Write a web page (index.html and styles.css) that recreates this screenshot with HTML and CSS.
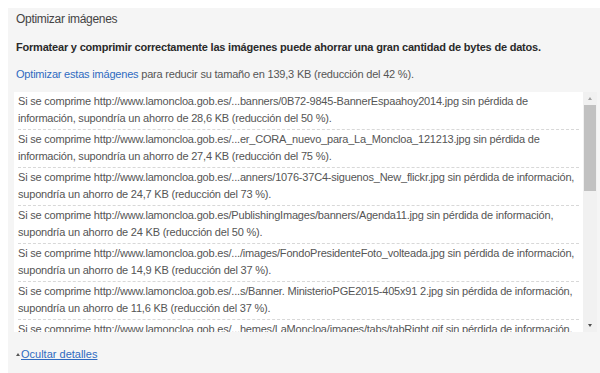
FILE: index.html
```html
<!DOCTYPE html>
<html lang="es">
<head>
<meta charset="utf-8">
<link rel="stylesheet" href="styles.css">
</head>
<body>
<div class="panel">
  <div class="title">Optimizar imágenes</div>
  <p class="summary">Formatear y comprimir correctamente las imágenes puede ahorrar una gran cantidad de bytes de datos.</p>
  <p class="action"><a href="#">Optimizar estas imágenes</a> para reducir su tamaño en 139,3 KB (reducción del 42 %).</p>
  <div class="listbox">
    <ul class="list">
      <li>Si se comprime http://www.lamoncloa.gob.es/...banners/0B72-9845-BannerEspaahoy2014.jpg sin pérdida de<br>información, supondría un ahorro de 28,6 KB (reducción del 50 %).</li>
      <li>Si se comprime http://www.lamoncloa.gob.es/...er_CORA_nuevo_para_La_Moncloa_121213.jpg sin pérdida de<br>información, supondría un ahorro de 27,4 KB (reducción del 75 %).</li>
      <li>Si se comprime http://www.lamoncloa.gob.es/...anners/1076-37C4-siguenos_New_flickr.jpg sin pérdida de información,<br>supondría un ahorro de 24,7 KB (reducción del 73 %).</li>
      <li>Si se comprime http://www.lamoncloa.gob.es/PublishingImages/banners/Agenda11.jpg sin pérdida de información,<br>supondría un ahorro de 24 KB (reducción del 50 %).</li>
      <li>Si se comprime http://www.lamoncloa.gob.es/.../images/FondoPresidenteFoto_volteada.jpg sin pérdida de información,<br>supondría un ahorro de 14,9 KB (reducción del 37 %).</li>
      <li>Si se comprime http://www.lamoncloa.gob.es/...s/Banner. MinisterioPGE2015-405x91 2.jpg sin pérdida de información,<br>supondría un ahorro de 11,6 KB (reducción del 37 %).</li>
      <li>Si se comprime http://www.lamoncloa.gob.es/...hemes/LaMoncloa/images/tabs/tabRight.gif sin pérdida de información,<br>supondría un ahorro de 8 KB (reducción del 30 %).</li>
    </ul>
    <div class="scrollbar">
      <span class="arrow up"></span>
      <div class="track"><div class="thumb"></div></div>
      <span class="arrow down"></span>
    </div>
  </div>
  <div class="footer"><span class="tri"></span><a href="#">Ocultar detalles</a></div>
</div>
</body>
</html>
```

FILE: styles.css
```css
html, body {
  margin: 0;
  padding: 0;
  background: #ffffff;
  height: 100%;
  overflow: hidden;
}
body {
  font-family: "Liberation Sans", Arial, sans-serif;
  color: #333;
}
.panel {
  margin: 8px 0 0 8px;
  background: #f5f5f5;
  padding: 4px 3px 20px 6px;
  min-height: 400px;
}
.title {
  font-size: 12px;
  line-height: 15px;
  letter-spacing: -0.3px;
  color: #444;
  padding: 0 0 0 2px;
}
.summary {
  margin: 13px 0 0 2px;
  font-size: 11px;
  line-height: 14px;
  font-weight: bold;
  color: #2a2a2a;
  letter-spacing: -0.2px;
  white-space: nowrap;
}
.action {
  margin: 13px 0 0 2px;
  font-size: 11px;
  line-height: 14px;
  letter-spacing: -0.2px;
  color: #555;
}
a {
  color: #2f6bc1;
  text-decoration: none;
}
.listbox {
  margin-top: 11px;
  display: flex;
  height: 240px;
  background: #fff;
}
.list {
  flex: 1;
  list-style: none;
  margin: 0;
  padding: 0 4px 0 4px;
  overflow: hidden;
  font-size: 11px;
  line-height: 17px;
  letter-spacing: -0.2px;
  color: #555;
}
.list li {
  padding: 1px 0 2px 0;
  border-bottom: 1px dashed #d8d8d8;
  white-space: nowrap;
}
.scrollbar {
  width: 14px;
  display: flex;
  flex-direction: column;
  align-items: center;
  background: #f1f1f1;
}
.arrow {
  height: 13px;
  width: 14px;
  position: relative;
}
.arrow::after {
  content: "";
  position: absolute;
  left: 5px;
  width: 0;
  height: 0;
  border-left: 2.5px solid transparent;
  border-right: 2.5px solid transparent;
}
.arrow.up::after {
  top: 5px;
  border-bottom: 3px solid #a3a3a3;
}
.arrow.down::after {
  top: 5px;
  border-top: 3px solid #505050;
}
.track {
  flex: 1;
  width: 100%;
  padding: 0 1px;
  box-sizing: border-box;
}
.thumb {
  margin-top: 0;
  height: 86px;
  background: #c1c1c1;
}
.footer {
  margin-top: 15px;
  font-size: 11px;
  line-height: 14px;
  padding-left: 2px;
  display: flex;
  align-items: center;
}
.footer a {
  text-decoration: underline;
}
.tri {
  width: 0;
  height: 0;
  border-left: 2.5px solid transparent;
  border-right: 2.5px solid transparent;
  border-bottom: 3px solid #555;
  margin-right: 1px;
  margin-top: 1px;
}
```
